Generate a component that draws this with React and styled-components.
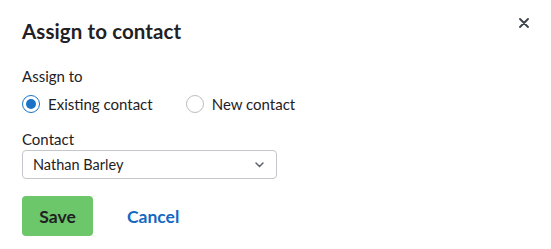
import styled, { createGlobalStyle } from "styled-components";

const GlobalStyle = createGlobalStyle`
  body {
    margin: 0;
    background: #fff;
    font-family: "Lato", "Liberation Sans", sans-serif;
    color: #1f2124;
  }
`;

const Dialog = styled.div`
  width: 551px;
  height: 249px;
  box-sizing: border-box;
  padding: 19px 22px 0 22px;
  display: flex;
  flex-direction: column;
`;

const Header = styled.div`
  display: flex;
  justify-content: space-between;
  align-items: flex-start;
  height: 24px;
`;

const Title = styled.h2`
  margin: 0;
  font-size: 20.5px;
  line-height: 24px;
  font-weight: 700;
  letter-spacing: 0.1px;
`;

const CloseButton = styled.button`
  border: none;
  background: none;
  padding: 0;
  width: 10px;
  height: 10px;
  margin-top: -1px;
  display: flex;
  cursor: pointer;
`;

const Label = styled.div`
  font-size: 15px;
  line-height: 18px;
  margin-top: ${(p) => p.$top}px;
`;

const RadioRow = styled.div`
  display: flex;
  align-items: center;
  gap: 33px;
  margin-top: 9px;
`;

const RadioOption = styled.label`
  display: flex;
  align-items: center;
  gap: 8px;
  font-size: 15px;
  line-height: 20px;
`;

const RadioDot = styled.span`
  width: 18px;
  height: 18px;
  box-sizing: border-box;
  border-radius: 50%;
  border: ${(p) => (p.$checked ? "1.5px solid #1a73c6" : "1px solid #b9bec4")};
  display: flex;
  align-items: center;
  justify-content: center;
  &::after {
    content: "";
    width: 10px;
    height: 10px;
    border-radius: 50%;
    background: #1a73c6;
    display: ${(p) => (p.$checked ? "block" : "none")};
  }
`;

const Select = styled.div`
  margin-top: 2px;
  width: 255px;
  height: 29px;
  box-sizing: border-box;
  border: 1px solid #c3c7cc;
  border-radius: 4px;
  display: flex;
  align-items: center;
  justify-content: space-between;
  padding: 0 12px 0 10px;
  font-size: 14.5px;
`;

const Actions = styled.div`
  display: flex;
  align-items: center;
  gap: 34px;
  margin-top: 17px;
`;

const SaveButton = styled.button`
  width: 71px;
  height: 40px;
  border: none;
  border-radius: 4px;
  background: #6cc66a;
  color: #1f2124;
  font-family: inherit;
  font-size: 17.5px;
  font-weight: 700;
`;

const CancelLink = styled.a`
  color: #1468c2;
  font-size: 17.5px;
  font-weight: 700;
  text-decoration: none;
`;

export default function App() {
  return (
    <>
      <GlobalStyle />
      <Dialog>
        <Header>
          <Title>Assign to contact</Title>
          <CloseButton aria-label="Close">
            <svg width="10" height="10" viewBox="0 0 10 10">
              <path d="M1 1L9 9M9 1L1 9" stroke="#3a4148" strokeWidth="1.8" strokeLinecap="round" />
            </svg>
          </CloseButton>
        </Header>
        <Label $top={24}>Assign to</Label>
        <RadioRow>
          <RadioOption>
            <RadioDot $checked />
            Existing contact
          </RadioOption>
          <RadioOption>
            <RadioDot />
            New contact
          </RadioOption>
        </RadioRow>
        <Label $top={16}>Contact</Label>
        <Select>
          <span>Nathan Barley</span>
          <svg width="9" height="6" viewBox="0 0 9 6">
            <path d="M1 1L4.5 4.5L8 1" stroke="#5d646b" strokeWidth="1.5" fill="none" strokeLinecap="round" />
          </svg>
        </Select>
        <Actions>
          <SaveButton>Save</SaveButton>
          <CancelLink href="#">Cancel</CancelLink>
        </Actions>
      </Dialog>
    </>
  );
}
